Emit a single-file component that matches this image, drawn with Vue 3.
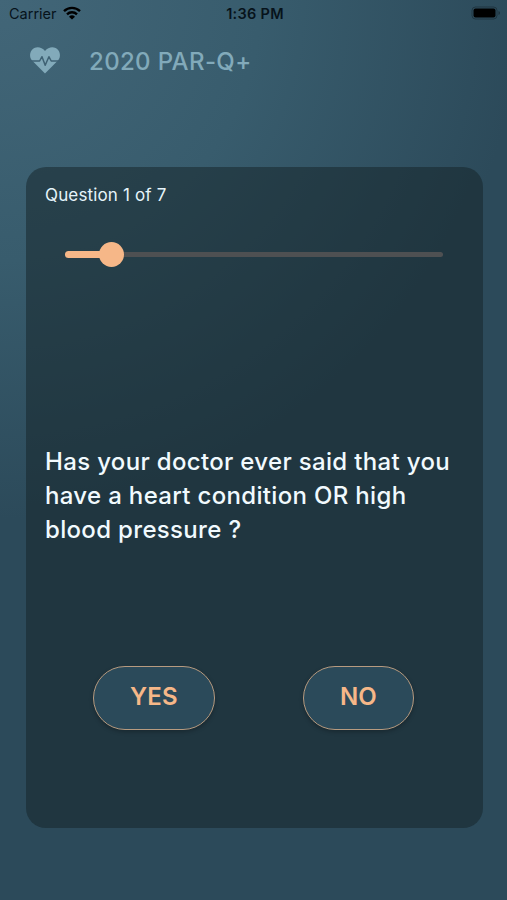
<script setup>
import { computed, ref } from "vue";

const current = ref(1);
const questions = ["Has your doctor ever said that you have a heart condition OR high blood pressure ?"];
const total = 7;
const answers = ["YES", "NO"];

// the slider has one step more than there are questions
const progress = computed(() => `${(current.value / (total + 1)) * 100}%`);
</script>

<template>
  <div class="screen">
    <div class="status">
      <div class="status__carrier">
        <span>Carrier</span>
        <svg class="status__wifi" viewBox="0 0 18 14">
          <g fill="none" stroke="currentColor" stroke-width="2.4">
            <path d="M1 5.1a11.6 11.6 0 0 1 16 0" />
            <path d="M4 8.3a7.3 7.3 0 0 1 10 0" />
          </g>
          <path d="M9 13.6 6 10.7a4.4 4.4 0 0 1 6 0z" fill="currentColor" />
        </svg>
      </div>
      <span class="status__time">1:36 PM</span>
      <svg class="status__battery" viewBox="0 0 30 14">
        <rect x="1" y="1" width="25" height="12" rx="3.5" fill="none" stroke="#000" stroke-opacity=".3" />
        <rect x="2.5" y="2.5" width="22" height="9" rx="2" />
        <path d="M27.5 5v4q1.5-.6 1.5-2t-1.5-2z" opacity=".35" />
      </svg>
    </div>

    <header class="header">
      <svg class="header__icon" viewBox="0 0 30 27">
        <path
          d="M15 26.4 1.8 13.2C-.5 10.6-.4 6.2 1.5 3.5 4.7-.7 11-.8 15 4c4-4.8 10.3-4.7 13.5-.5 1.9 2.7 2 7.1-.3 9.7z"
          fill="currentColor"
        />
        <path
          d="M0 14h9.6l2.4-4.3 3.2 8.5 3.7-8.5 2.3 4.3H30"
          fill="none"
          stroke="#3f6274"
          stroke-width="1.5"
          stroke-linejoin="round"
        />
      </svg>
      <h1 class="header__title">2020 PAR-Q+</h1>
    </header>

    <main class="card">
      <p class="card__count">Question {{ current }} of {{ total }}</p>
      <div class="slider">
        <div class="slider__fill" :style="{ width: progress }">
          <span class="slider__thumb" />
        </div>
      </div>
      <p class="card__question">{{ questions[current - 1] }}</p>
      <div class="card__answers">
        <button v-for="answer in answers" :key="answer" class="answer" v-text="answer" />
      </div>
    </main>
  </div>
</template>

<style>
body {
  background: #2c4a5a;
}
</style>

<style scoped>
.screen {
  box-sizing: border-box;
  display: flex;
  flex-direction: column;
  height: 900px;
  padding-bottom: 72px;
  overflow: hidden;
  font-family: Inter, "Liberation Sans", sans-serif;
  background: radial-gradient(circle 520px at 0 0, #426678, #385c6d 50%, #2c4a5a);
}

.status {
  display: grid;
  grid-template-columns: 1fr auto 1fr;
  align-items: center;
  height: 27px;
  padding: 0 6px 0 9px;
  font-size: 14.5px;
  color: #07131b;
}

.status__carrier {
  display: flex;
  align-items: center;
  gap: 6px;
}

.status__wifi {
  width: 18px;
  height: 14px;
  margin-top: -2px;
  color: #000;
}

.status__time {
  font-weight: 600;
  letter-spacing: 0.3px;
}

.status__battery {
  justify-self: end;
  width: 30px;
  height: 14px;
  margin-top: -1px;
}

.header {
  display: flex;
  align-items: center;
  gap: 30px;
  height: 66px;
  padding-left: 30px;
  color: #82aaba;
}

.header__icon {
  width: 30px;
  height: 27px;
}

.header__title {
  margin: 2px 0 0 -1px;
  font-size: 24px;
  font-weight: 500;
  letter-spacing: 0.35px;
}

.card {
  box-sizing: border-box;
  display: flex;
  flex: 1;
  flex-direction: column;
  margin: 74px 24px 0 26px;
  padding: 17px 19px 0;
  border-radius: 20px;
  background: rgba(20, 34, 38, 0.5);
}

.card__count {
  margin: 0;
  font-size: 17px;
  line-height: 22px;
  letter-spacing: 0.15px;
  color: #e5f4fa;
}

.slider {
  height: 5px;
  margin: 46px 21px 0 20px;
  border-radius: 3px;
  background: #4e5052;
}

.slider__fill {
  position: relative;
  top: -1px;
  height: 7px;
  border-radius: 4px;
  background: #f6b788;
}

.slider__thumb {
  position: absolute;
  top: -9px;
  right: -12px;
  width: 25px;
  height: 25px;
  border-radius: 50%;
  background: #f6b788;
}

.card__question {
  margin: 188px 0 0;
  font-size: 24px;
  font-weight: 500;
  line-height: 34px;
  letter-spacing: 0.33px;
  color: #f1fafe;
}

.card__answers {
  display: flex;
  justify-content: space-between;
  margin: 119px 50px 0 48px;
}

.answer {
  height: 64px;
  padding: 0 36px 3px;
  border: 1.5px solid #b79b80;
  border-radius: 32px;
  background: #2b4a5a;
  box-shadow: 0 2px 4px rgba(0, 0, 0, 0.25);
  font: 600 24px Inter, "Liberation Sans", sans-serif;
  letter-spacing: 0.2px;
  color: #f6b788;
}
</style>
